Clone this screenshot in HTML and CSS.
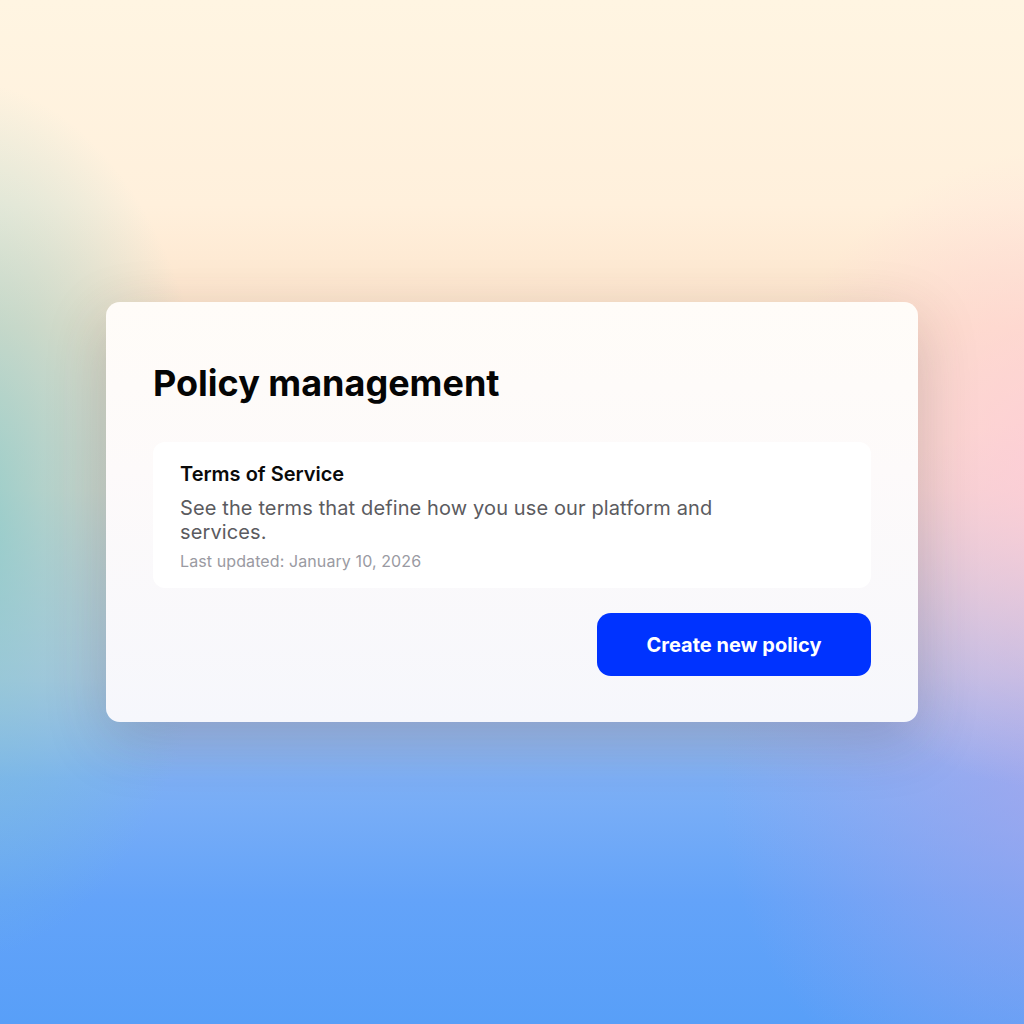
FILE: index.html
```html
<!DOCTYPE html>
<html lang="en">
<head>
    <meta charset="UTF-8">
    <meta name="viewport" content="width=device-width, initial-scale=1.0">
    <title>Policy management</title>
    <link rel="stylesheet" href="styles.css">
</head>
<body>
    <div class="panel">
        <h1 class="panel-title">Policy management</h1>
        <div class="policy-card">
            <div class="policy-name">Terms of Service</div>
            <p class="policy-desc">See the terms that define how you use our platform and services.</p>
            <div class="policy-date">Last updated: January 10, 2026</div>
        </div>
        <div class="actions">
            <button class="create-btn">Create new policy</button>
        </div>
    </div>
</body>
</html>
```

FILE: styles.css
```css
html, body {
    height: 100%;
}

body {
    display: flex;
    justify-content: center;
    align-items: center;
    margin: 0;
    font-family: Inter, "Noto Sans", sans-serif;
    background-color: #fdf3e4;
    background-image:
        radial-gradient(ellipse 260px 440px at -40px 520px, rgba(120, 200, 200, 0.8), rgba(120, 200, 200, 0) 100%),
        radial-gradient(ellipse 300px 320px at 1060px 470px, rgba(255, 205, 215, 0.9), rgba(255, 205, 215, 0) 100%),
        radial-gradient(ellipse 340px 360px at 1060px 780px, rgba(170, 165, 235, 0.75), rgba(170, 165, 235, 0) 100%),
        linear-gradient(180deg, #fff5e2 0%, #fff0dc 20%, #fde3ca 32%, #f6dccd 48%, #b9c7e6 66%, #7eb0f6 76%, #63a3f9 88%, #589ff8 100%);
}

.panel {
    width: 812px;
    box-sizing: border-box;
    padding: 59px 47px 46px;
    border-radius: 14px;
    background: linear-gradient(180deg, #fffcf8 0%, #fdfafa 40%, #f6f7fc 100%);
    box-shadow: 0 18px 60px rgba(60, 50, 60, 0.22);
}

.panel-title {
    margin: 0 0 37px;
    font-size: 36px;
    line-height: 44px;
    font-weight: 700;
    color: #050505;
}

.policy-card {
    padding: 20px 27px 17px;
    border-radius: 12px;
    background: #fff;
}

.policy-name {
    font-size: 20px;
    line-height: 24px;
    font-weight: 600;
    color: #0a0a0a;
}

.policy-desc {
    margin: 10px 0 7px;
    max-width: 560px;
    font-size: 20px;
    line-height: 24px;
    letter-spacing: 0.12px;
    color: #5b5b60;
}

.policy-date {
    font-size: 16px;
    line-height: 20px;
    letter-spacing: 0.1px;
    color: #9a9aa2;
}

.actions {
    display: flex;
    justify-content: flex-end;
    margin-top: 25px;
}

.create-btn {
    width: 274px;
    height: 63px;
    border: none;
    border-radius: 14px;
    background: #0033ff;
    color: #fff;
    font-family: inherit;
    font-size: 20px;
    font-weight: 700;
    cursor: pointer;
}
```
